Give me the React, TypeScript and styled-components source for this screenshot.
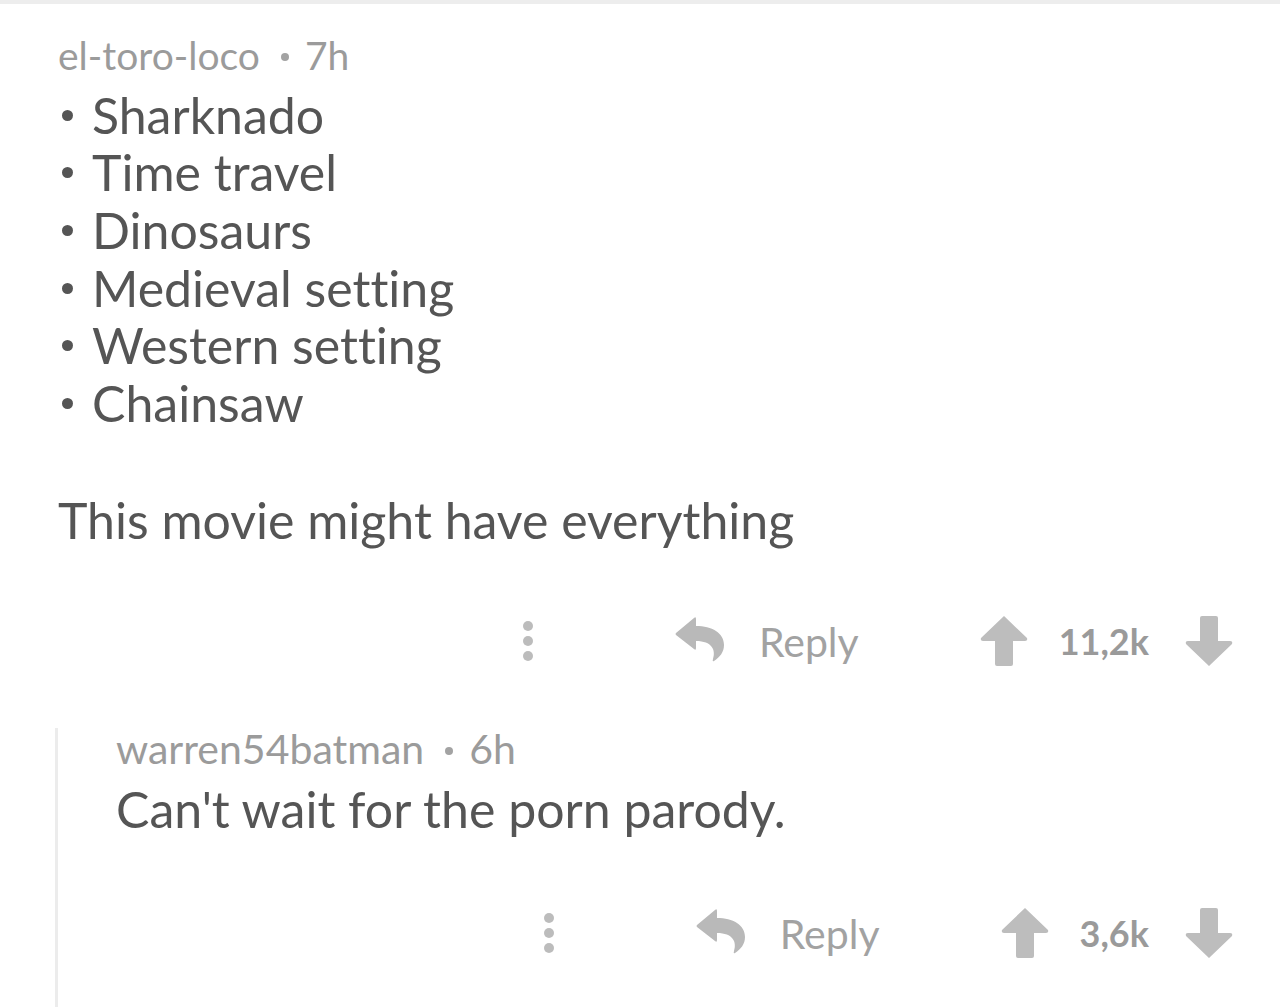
import React from 'react';
import styled, { createGlobalStyle } from 'styled-components';

const GlobalStyle = createGlobalStyle`
  html, body {
    margin: 0;
    padding: 0;
    background: #ffffff;
  }

  body {
    font-family: Lato, 'Noto Sans', sans-serif;
    font-variant-ligatures: none;
    overflow: hidden;
  }
`;

const Page = styled.div`
  width: 1280px;
  height: 1007px;
  display: flex;
  flex-direction: column;
  overflow: hidden;
`;

const TopRule = styled.div`
  height: 4px;
  flex-shrink: 0;
  background: #ededed;
`;

const Thread = styled.div`
  flex: 1;
  display: flex;
  flex-direction: column;
  padding: 28px 47px 0 58px;
`;

const Meta = styled.div<{ $size: number; $lh: number }>`
  font-size: ${(p) => p.$size}px;
  line-height: ${(p) => p.$lh};
  color: #9b9b9b;
  white-space: nowrap;
`;

const Dot = styled.span`
  display: inline-block;
  width: 8px;
  height: 8px;
  border-radius: 50%;
  background: #a3a3a3;
  vertical-align: 0.22em;
  margin: 0 16px 0 21px;
`;

const Body = styled.div`
  font-size: 50px;
  line-height: 1.2;
  color: #555555;
  white-space: nowrap;
`;

const BulletList = styled.ul`
  list-style: none;
  margin: 8px 0 0;
  padding: 0;
  font-size: 50px;
  line-height: 57.6px;
  color: #555555;

  li {
    display: block;
    white-space: nowrap;
  }

  li::before {
    content: '';
    display: inline-block;
    width: 11px;
    height: 11px;
    border-radius: 50%;
    background: #555555;
    vertical-align: 0.26em;
    margin: 0 19px 0 4px;
  }
`;

const Paragraph = styled(Body)`
  margin-top: 58px;
`;

const ActionRow = styled.div<{ $top: number }>`
  display: flex;
  justify-content: flex-end;
  align-items: center;
  height: 50px;
  margin-top: ${(p) => p.$top}px;
`;

const Kebab = styled.svg`
  width: 12px;
  height: 44px;
  fill: #bcbcbc;
  margin-right: 141px;
`;

const ReplyButton = styled.div`
  display: flex;
  align-items: center;
  gap: 34px;
  font-size: 41px;
  color: #a2a2a2;
`;

const ReplyIcon = styled.svg`
  width: 50px;
  height: 46px;
  fill: #b9b9b9;
  margin-top: -4px;
`;

const VoteGroup = styled.div`
  display: flex;
  align-items: center;
  margin-left: 121px;
`;

const Score = styled.span`
  font-size: 36px;
  font-weight: 700;
  color: #9a9a9a;
  margin: 0 36px 0 31px;
`;

const Arrow = styled.svg`
  width: 48px;
  height: 50px;
  fill: #bdbdbd;
`;

const Nested = styled.div`
  flex: 1;
  margin: 62px 0 0 -3px;
  padding-left: 58px;
  border-left: 3px solid #ececec;
`;

const NestedBody = styled(Body)`
  margin-top: 10px;
`;

const UpArrow: React.FC = () => (
  <Arrow viewBox="0 0 48 50">
    <path d="M24 0 L47 22 Q48 25 45 25 L33 25 L33 48 Q33 50 31 50 L17 50 Q15 50 15 48 L15 25 L3 25 Q0 25 1 22 Z" />
  </Arrow>
);

const DownArrow: React.FC = () => (
  <Arrow viewBox="0 0 48 50">
    <path d="M24 50 L47 28 Q48 25 45 25 L33 25 L33 2 Q33 0 31 0 L17 0 Q15 0 15 2 L15 25 L3 25 Q0 25 1 28 Z" />
  </Arrow>
);

const Actions: React.FC<{ score: string; top: number }> = ({ score, top }) => (
  <ActionRow $top={top}>
    <Kebab viewBox="0 0 12 44">
      <circle cx="6" cy="7" r="5" />
      <circle cx="6" cy="22" r="5" />
      <circle cx="6" cy="37" r="5" />
    </Kebab>
    <ReplyButton>
      <ReplyIcon viewBox="0 0 50 46">
        <path d="M1 17 L19 2 Q21 0 21 3 L21 10 C37 10 49 17 49 29 C49 36 45 41 39 45 Q37 46 38 43 C41 34 37 25 21 25 L21 32 Q21 35 19 33 L1 19 Q0 18 1 17 Z" />
      </ReplyIcon>
      Reply
    </ReplyButton>
    <VoteGroup>
      <UpArrow />
      <Score>{score}</Score>
      <DownArrow />
    </VoteGroup>
  </ActionRow>
);

const items = ['Sharknado', 'Time travel', 'Dinosaurs', 'Medieval setting', 'Western setting', 'Chainsaw'];

const App: React.FC = () => (
  <Page>
    <GlobalStyle />
    <TopRule />
    <Thread>
      <Meta $size={39} $lh={1.2}>
        el-toro-loco
        <Dot />
        7h
      </Meta>
      <BulletList>
        {items.map((item) => <li key={item}>{item}</li>)}
      </BulletList>
      <Paragraph>This movie might have everything</Paragraph>
      <Actions score="11,2k" top={66} />
      <Nested>
        <Meta $size={41} $lh={1}>
          warren54batman
          <Dot />
          6h
        </Meta>
        <NestedBody>Can't wait for the porn parody.</NestedBody>
        <Actions score="3,6k" top={69} />
      </Nested>
    </Thread>
  </Page>
);

export default App;
